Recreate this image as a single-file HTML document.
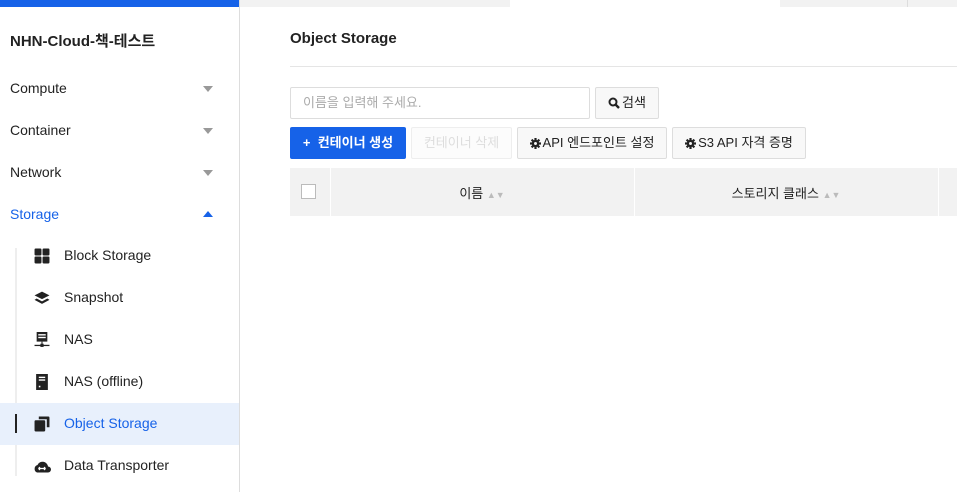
<!DOCTYPE html>
<html><head><meta charset="utf-8"><style>
*{margin:0;padding:0;box-sizing:border-box}
body{width:957px;height:492px;overflow:hidden;background:#fff;font-family:"Liberation Sans","Noto Sans CJK KR",sans-serif;color:#222;position:relative;font-size:14px}
.a{position:absolute}
.side{left:0;top:0;width:240px;height:492px;border-right:1px solid #ddd}
.menu{left:10px;font-size:14px;color:#222}
.caret{left:203px;width:0;height:0;border-left:5px solid transparent;border-right:5px solid transparent;border-top:6px solid #999}
.sub{left:64px;font-size:14px;color:#222}
.ic{left:34px;width:16px;height:16px}
.btn{height:32px;border:1px solid #ddd;border-radius:2px;background:#f8f8f8;font-size:13px;line-height:30px;text-align:center;color:#222}
.btn svg{vertical-align:-2px;margin-right:2px}
</style></head><body>
<div class="a" style="left:0;top:0;width:240px;height:7px;background:#1662e8"></div>
<div class="a" style="left:240px;top:0;width:270px;height:7px;background:#f2f2f2"></div>
<div class="a" style="left:780px;top:0;width:177px;height:7px;background:#f2f2f2"></div>
<div class="a" style="left:907px;top:0;width:1px;height:7px;background:#ddd"></div>
<div class="a side"></div>
<div class="a" style="left:10px;top:30px;font-size:15px;font-weight:bold;color:#222">NHN-Cloud-책-테스트</div>
<div class="a menu" style="top:80px">Compute</div><div class="a caret" style="top:86px"></div>
<div class="a menu" style="top:122px">Container</div><div class="a caret" style="top:128px"></div>
<div class="a menu" style="top:164px">Network</div><div class="a caret" style="top:170px"></div>
<div class="a menu" style="top:206px;color:#1662e8">Storage</div><div class="a" style="left:203px;top:211px;width:0;height:0;border-left:5px solid transparent;border-right:5px solid transparent;border-bottom:6px solid #1662e8"></div>
<div class="a" style="left:15px;top:248px;width:2px;height:228px;background:#eee"></div>
<div class="a" style="left:0;top:403px;width:239px;height:42px;background:#e8f0fc"></div>
<div class="a" style="left:15px;top:414px;width:2px;height:19px;background:#222"></div>
<svg class="a ic" style="top:248px" viewBox="0 0 15 15"><rect x="0.5" y="0.5" width="6.5" height="6.5" rx="1" fill="#222"/><rect x="8" y="0.5" width="6.5" height="6.5" rx="1" fill="#222"/><rect x="0.5" y="8" width="6.5" height="6.5" rx="1" fill="#222"/><rect x="8" y="8" width="6.5" height="6.5" rx="1" fill="#222"/></svg>
<div class="a sub" style="top:247px">Block Storage</div>
<svg class="a ic" style="top:290px" viewBox="0 0 15 15"><path d="M7.5 1.5 14.5 5 7.5 8.5 0.5 5Z" fill="#222"/><path d="M2.5 8 0.5 9.3 7.5 13 14.5 9.3 12.5 8 7.5 10.7Z" fill="#222"/></svg>
<div class="a sub" style="top:289px">Snapshot</div>
<svg class="a ic" style="top:332px" viewBox="0 0 15 15"><rect x="2.5" y="0" width="10" height="9" fill="#222"/><rect x="4" y="2" width="7" height="1.3" fill="#fff"/><rect x="4" y="4.5" width="7" height="1.3" fill="#fff"/><rect x="7" y="9" width="1" height="3" fill="#222"/><rect x="0.5" y="12" width="14" height="1.2" fill="#222"/><rect x="6" y="11" width="3" height="3" fill="#222"/></svg>
<div class="a sub" style="top:331px">NAS</div>
<svg class="a ic" style="top:374px" viewBox="0 0 15 15"><rect x="2" y="0" width="11" height="15" fill="#222"/><rect x="4.5" y="2.5" width="6" height="1.3" fill="#fff"/><rect x="4.5" y="5" width="6" height="1.3" fill="#fff"/><rect x="4.5" y="11" width="1.5" height="1.5" fill="#fff"/></svg>
<div class="a sub" style="top:373px">NAS (offline)</div>
<svg class="a ic" style="top:416px" viewBox="0 0 15 15"><path d="M4.5 0.5h9a1 1 0 0 1 1 1v9h-2.5V3H4.5Z" fill="#222"/><rect x="0.5" y="4" width="10" height="10.5" rx="1" fill="#222"/></svg>
<div class="a sub" style="top:415px;color:#1662e8">Object Storage</div>
<svg class="a ic" style="top:458px;left:33px;width:18px" viewBox="0 0 18 15"><path d="M4 14h11a3 3 0 0 0 0-6 5.5 5.5 0 0 0-10.5-1.5A4 4 0 0 0 4 14Z" fill="#222"/><path d="M5.5 10h7M5.5 10l1.5-1.5M5.5 10l1.5 1.5M12.5 10l-1.5-1.5M12.5 10l-1.5 1.5" stroke="#fff" stroke-width="1.2" fill="none"/></svg>
<div class="a sub" style="top:457px">Data Transporter</div>

<div class="a" style="left:290px;top:30px;font-size:15px;font-weight:bold">Object Storage</div>
<div class="a" style="left:290px;top:66px;width:667px;height:1px;background:#e5e5e5"></div>
<div class="a" style="left:290px;top:87px;width:300px;height:32px;border:1px solid #ddd;border-radius:2px;font-size:13px;color:#aaa;line-height:30px;padding-left:12px">이름을 입력해 주세요.</div>
<div class="a btn" style="left:595px;top:87px;width:64px"><svg width="12" height="12" viewBox="0 0 12 12"><circle cx="5" cy="5" r="3.5" stroke="#222" stroke-width="2" fill="none"/><path d="M7.5 7.5 11 11" stroke="#222" stroke-width="2.4"/></svg>검색</div>
<div class="a btn" style="left:290px;top:127px;width:116px;background:#1662e8;border-color:#1662e8;color:#fff;font-weight:bold">+ &nbsp;컨테이너 생성</div>
<div class="a btn" style="left:411px;top:127px;width:101px;background:#fcfcfc;border-color:#eee;color:#ddd">컨테이너 삭제</div>
<div class="a btn" style="left:517px;top:127px;width:150px"><svg width="11" height="11" viewBox="0 0 12 12"><g fill="#222"><circle cx="6" cy="6" r="4"/><rect x="4.8" y="0" width="2.4" height="12"/><rect x="0" y="4.8" width="12" height="2.4"/><rect x="4.8" y="0" width="2.4" height="12" transform="rotate(45 6 6)"/><rect x="4.8" y="0" width="2.4" height="12" transform="rotate(-45 6 6)"/></g><circle cx="6" cy="6" r="1.6" fill="#f8f8f8"/></svg>API 엔드포인트 설정</div>
<div class="a btn" style="left:672px;top:127px;width:134px"><svg width="11" height="11" viewBox="0 0 12 12"><g fill="#222"><circle cx="6" cy="6" r="4"/><rect x="4.8" y="0" width="2.4" height="12"/><rect x="0" y="4.8" width="12" height="2.4"/><rect x="4.8" y="0" width="2.4" height="12" transform="rotate(45 6 6)"/><rect x="4.8" y="0" width="2.4" height="12" transform="rotate(-45 6 6)"/></g><circle cx="6" cy="6" r="1.6" fill="#f8f8f8"/></svg>S3 API 자격 증명</div>
<div class="a" style="left:290px;top:168px;width:667px;height:48px;background:#f2f2f2"></div>
<div class="a" style="left:330px;top:168px;width:1px;height:48px;background:#fff"></div>
<div class="a" style="left:634px;top:168px;width:1px;height:48px;background:#fff"></div>
<div class="a" style="left:938px;top:168px;width:1px;height:48px;background:#fff"></div>
<div class="a" style="left:301px;top:184px;width:15px;height:15px;border:1px solid #bbb;background:#fff"></div>
<div class="a" style="left:330px;top:183px;width:304px;text-align:center;font-size:13px">이름 <span style="color:#bbb;font-size:9px">▲▼</span></div>
<div class="a" style="left:634px;top:183px;width:304px;text-align:center;font-size:13px">스토리지 클래스 <span style="color:#bbb;font-size:9px">▲▼</span></div>
</body></html>
